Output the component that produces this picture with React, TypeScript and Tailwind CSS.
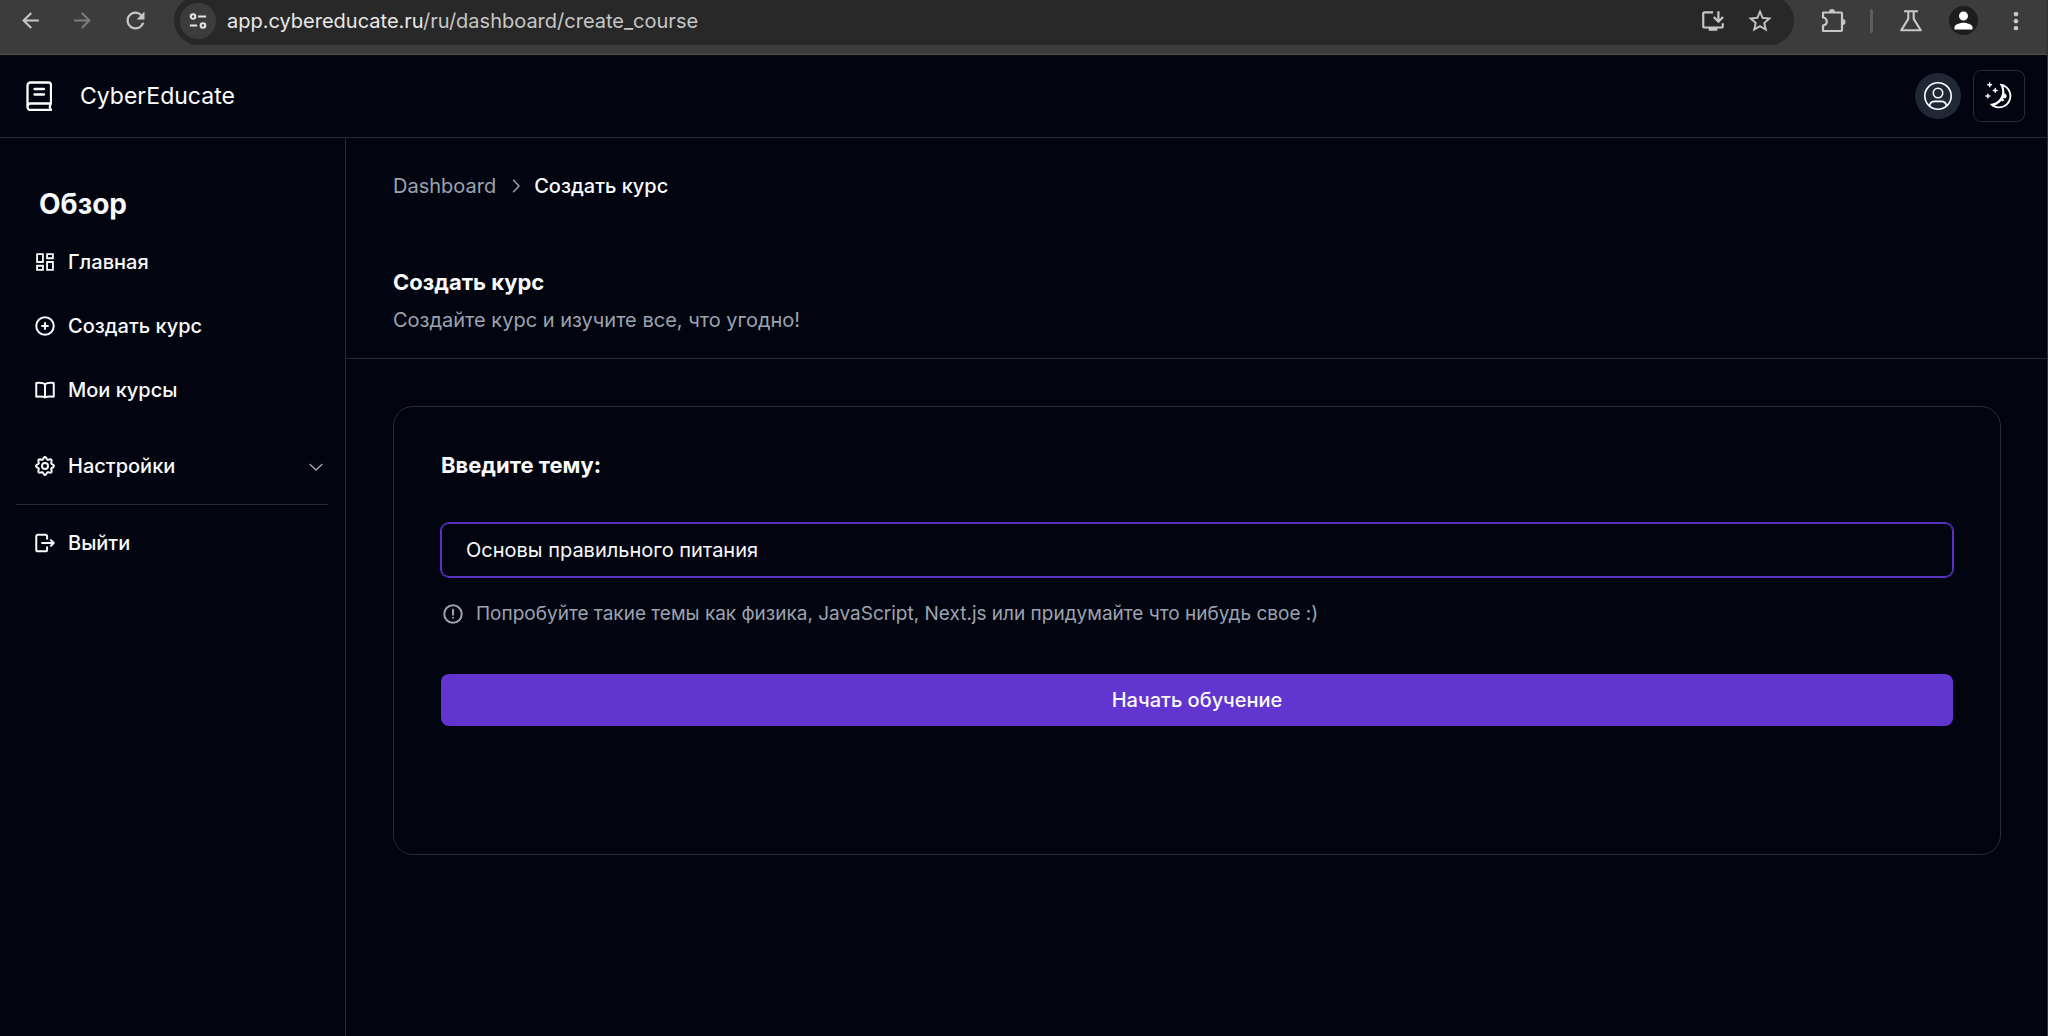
import React, { useState } from 'react';
import { RxMoon, RxChevronRight, RxChevronDown } from 'react-icons/rx';
import {
  MdArrowBack,
  MdArrowForward,
  MdRefresh,
  MdStarBorder,
  MdMoreVert,
  MdPerson,
  MdOutlineInstallDesktop,
} from 'react-icons/md';

const BookLogo = ({ className }) => (
  <svg viewBox="0 0 26 30" fill="none" stroke="currentColor" strokeWidth="2.300" strokeLinecap="round" strokeLinejoin="round" className={className}>
    <path d="M1.500 26V4.500a3 3 0 0 1 3-3h18a2.500 2.500 0 0 1 2.500 2.500v18.500H4.500a3 3 0 0 0-3 3v.5a3 3 0 0 0 3 3H25c-1.300-1.800-1.300-4.700 0-6.500" />
    <path d="M8.500 8h9.500M8.500 13.500h9.500" />
  </svg>
);

const StrokeIcon = ({ className, children }) => (
  <svg viewBox="0 0 24 24" fill="none" stroke="currentColor" strokeWidth="2.400" strokeLinecap="round" strokeLinejoin="round" className={className}>
    {children}
  </svg>
);

const DashboardIcon = ({ className }) => (
  <svg viewBox="0 0 24 24" fill="none" stroke="currentColor" strokeWidth="2.200" className={className}>
    <path d="M2.500 2.500h7v9.500h-7zM14.500 2.500h7v5h-7zM14.500 12h7v9.500h-7zM2.500 16.500h7v5h-7z" />
  </svg>
);

const PlusIcon = ({ className }) => (
  <StrokeIcon className={className}>
    <circle cx="12" cy="12" r="10.500" />
    <path d="M12 8.500v7M8.500 12h7" />
  </StrokeIcon>
);

const BookIcon = ({ className }) => (
  <StrokeIcon className={className}>
    <path d="M12 5C10 3.500 6 3 1.500 3.500V20c4.500-.5 8.500-.2 10.500 1 2-1.200 6-1.500 10.500-1V3.500C18 3 14 3.500 12 5zM12 5v16" />
  </StrokeIcon>
);

const LogoutIcon = ({ className }) => (
  <StrokeIcon className={className}>
    <path d="M14.500 7V4a2 2 0 0 0-2-2h-9a2 2 0 0 0-2 2v16a2 2 0 0 0 2 2h9a2 2 0 0 0 2-2v-3" />
    <path d="M8.500 12h14M19 8.500l3.500 3.500-3.500 3.500" />
  </StrokeIcon>
);

const HintIcon = ({ className }) => (
  <StrokeIcon className={className}>
    <circle cx="12" cy="12" r="10.500" />
    <path d="M12 7v6M12 16.500v.1" />
  </StrokeIcon>
);

const ProfileIcon = ({ className }) => (
  <svg viewBox="0 0 28 28" fill="none" stroke="currentColor" strokeWidth="1.600" className={className}>
    <circle cx="14" cy="14" r="13.200" />
    <circle cx="14" cy="11" r="4.700" />
    <path d="M5.500 24c.4-3.400 2.800-4.600 5.500-4.600h6c2.700 0 5.100 1.200 5.500 4.600" />
  </svg>
);

// eight soft teeth around the hub
const GEAR_POINTS = Array.from({ length: 96 }, (_, i) => {
  const angle = (i / 96) * Math.PI * 2;
  const radius = 9.4 + Math.cos(angle * 8) * 1.3;
  return `${(12 + radius * Math.sin(angle)).toFixed(2)},${(12 - radius * Math.cos(angle)).toFixed(2)}`;
}).join(' ');

const GearIcon = ({ className }) => (
  <StrokeIcon className={className}>
    <polygon points={GEAR_POINTS} />
    <circle cx="12" cy="12" r="3.600" />
  </StrokeIcon>
);

const TuneIcon = ({ className }) => (
  <svg viewBox="0 0 20 20" fill="none" stroke="currentColor" strokeWidth="2.400" className={className}>
    <circle cx="4.500" cy="5" r="2.500" />
    <path d="M10 5h9M1 15h8" />
    <circle cx="15.500" cy="15" r="2.500" />
  </svg>
);

const PuzzleIcon = ({ className }) => (
  <svg viewBox="0 0 26 26" fill="none" stroke="currentColor" strokeWidth="2.200" strokeLinejoin="round" className={className}>
    <path d="M3 4.500h18a1 1 0 0 1 1 1V22a1 1 0 0 1-1 1H3v-5.500c5-.8 5-7.200 0-8z" />
    <path d="M9 4a3 3 0 0 1 6 0zM22.500 11a3 3 0 0 1 0 6z" fill="currentColor" stroke="none" />
  </svg>
);

const FlaskIcon = ({ className }) => (
  <svg viewBox="0 0 24 24" fill="none" stroke="currentColor" strokeWidth="2" strokeLinejoin="round" className={className}>
    <path d="M5.500 3h13M9.500 3v7L3 20.500h18L14.500 10V3" />
  </svg>
);

const BrowserBar = () => (
  <div className="flex h-[55px] items-start overflow-hidden border-b border-[#50504f] bg-[#3c3c3c] text-[#c7c7c7]">
    <div className="flex h-[41px] w-[174px] shrink-0 items-center gap-[27px] pl-[18px]">
      <button aria-label="Back"><MdArrowBack className="size-[25px]" /></button>
      <button aria-label="Forward" className="text-[#7c7c7c]"><MdArrowForward className="size-[25px]" /></button>
      <button aria-label="Reload"><MdRefresh className="size-[27px]" /></button>
    </div>
    <div className="-mt-1 flex h-[49px] flex-1 items-center rounded-full bg-[#282828] pl-[6px] pr-5">
      <button aria-label="Site settings" className="flex size-9 items-center justify-center rounded-full bg-[#3c3c3c] text-[#e3e3e3]">
        <TuneIcon className="size-[18px]" />
      </button>
      <p className="flex-1 pl-[11px] text-[20px] text-[#c7c7c7]">
        <span className="text-[#e8e8e8]">app.cybereducate.ru</span>/ru/dashboard/create_course
      </p>
      <button aria-label="Install app" className="mr-5"><MdOutlineInstallDesktop className="size-[26px]" /></button>
      <button aria-label="Bookmark"><MdStarBorder className="size-[28px]" /></button>
    </div>
    <div className="flex h-[41px] items-center pl-[26px] pr-[18px]">
      <button aria-label="Extensions"><PuzzleIcon className="size-[26px]" /></button>
      <span className="ml-6 h-6 w-[3px] rounded bg-[#5c5c5c]" />
      <button aria-label="Labs" className="ml-[25px]"><FlaskIcon className="size-[26px]" /></button>
      <button aria-label="Profile" className="ml-[25px] flex size-[29px] items-center justify-center rounded-full bg-[#1d1f1e] text-white">
        <MdPerson className="size-[27px]" />
      </button>
      <button aria-label="Menu" className="ml-6"><MdMoreVert className="size-[28px]" /></button>
    </div>
  </div>
);

const Header = () => (
  <header className="flex h-[83px] items-center border-b border-[#272d37] pl-[26px] pr-[23px]">
    <BookLogo className="h-[30px] w-[26px] text-white" />
    <a href="#" className="pl-7 text-[23px] text-white">CyberEducate</a>
    <div className="ml-auto flex items-center gap-3">
      <button aria-label="Account" className="flex size-[46px] items-center justify-center rounded-full bg-[#202835] text-white">
        <ProfileIcon className="size-[28px]" />
      </button>
      <button aria-label="Theme" className="flex size-[52px] items-center justify-center rounded-lg border border-[#272d37] text-white">
        <RxMoon className="size-[28px]" />
      </button>
    </div>
  </header>
);

const NavItem = ({ icon: Icon, label }) => (
  <a href="#" className="flex h-[52px] items-center gap-[13px] pl-[19px] text-[20px] font-medium text-[#f9fafb]">
    <Icon className="size-5" />
    {label}
  </a>
);

const Sidebar = () => (
  <aside className="w-[346px] shrink-0 border-r border-[#272d37] px-4 pt-[46px]">
    <h2 className="mb-3 pl-[23px] text-[28px] font-bold leading-[40px] text-[#f9fafb]">Обзор</h2>
    <nav>
      <div className="space-y-3">
        <NavItem icon={DashboardIcon} label="Главная" />
        <NavItem icon={PlusIcon} label="Создать курс" />
        <NavItem icon={BookIcon} label="Мои курсы" />
      </div>
      <button className="mt-6 flex h-[52px] w-full items-center gap-[13px] pl-[19px] pr-[2px] text-[20px] font-medium text-[#f9fafb]">
        <GearIcon className="size-5" />
        Настройки
        <RxChevronDown className="ml-auto size-[22px] text-[#9ca3af]" />
      </button>
      <div className="mr-px mt-3 border-t border-[#272d37] pt-3">
        <NavItem icon={LogoutIcon} label="Выйти" />
      </div>
    </nav>
  </aside>
);

const CreateCourse = () => {
  const [topic, setTopic] = useState('Основы правильного питания');

  return (
    <main className="min-w-0 flex-1 pt-[34px]">
      <nav className="flex items-center px-[47px] text-[20px] leading-[28px] text-[#9ca3af]">
        <a href="#">Dashboard</a>
        <RxChevronRight className="mx-2 size-[22px]" />
        <span className="font-medium text-[#f9fafb]">Создать курс</span>
      </nav>
      <div className="mt-[66px] border-b border-[#272d37] px-[47px] pb-6">
        <h1 className="text-[22px] font-bold leading-[32px] text-[#f9fafb]">Создать курс</h1>
        <p className="mt-2 text-[20px] leading-[28px] text-[#9ca3af]">Создайте курс и изучите все, что угодно!</p>
      </div>
      <form
        onSubmit={(e) => e.preventDefault()}
        className="mx-[47px] mt-[47px] rounded-[20px] border border-[#272d37] px-[47px] pb-[128px] pt-[42px]"
      >
        <label htmlFor="topic" className="block text-[22px] font-bold leading-[32px] text-[#f9fafb]">Введите тему:</label>
        <input
          id="topic"
          value={topic}
          onChange={(e) => setTopic(e.target.value)}
          className="mt-[42px] block h-[54px] w-full rounded-lg border border-[#5b33c4] bg-transparent px-6 text-[20px] text-[#f9fafb] outline-none ring-1 ring-[#5b33c4]"
        />
        <p className="mt-[23px] flex items-center gap-[13px] text-[19px] leading-[28px] text-[#9ca3af]">
          <HintIcon className="ml-[2px] size-5" />
          Попробуйте такие темы как физика, JavaScript, Next.js или придумайте что нибудь свое :)
        </p>
        <button type="submit" className="mt-[46px] h-[52px] w-full rounded-lg bg-[#6235d0] text-[20px] font-medium text-[#f9fafb]">
          Начать обучение
        </button>
      </form>
    </main>
  );
};

const App = () => (
  <div className="relative flex min-h-screen flex-col bg-[#020510] font-['Inter','Liberation_Sans',sans-serif]">
    <BrowserBar />
    <Header />
    <div className="flex flex-1">
      <Sidebar />
      <CreateCourse />
    </div>
    <div className="absolute inset-y-0 right-0 w-px bg-[#303236]" />
  </div>
);

export default App;
